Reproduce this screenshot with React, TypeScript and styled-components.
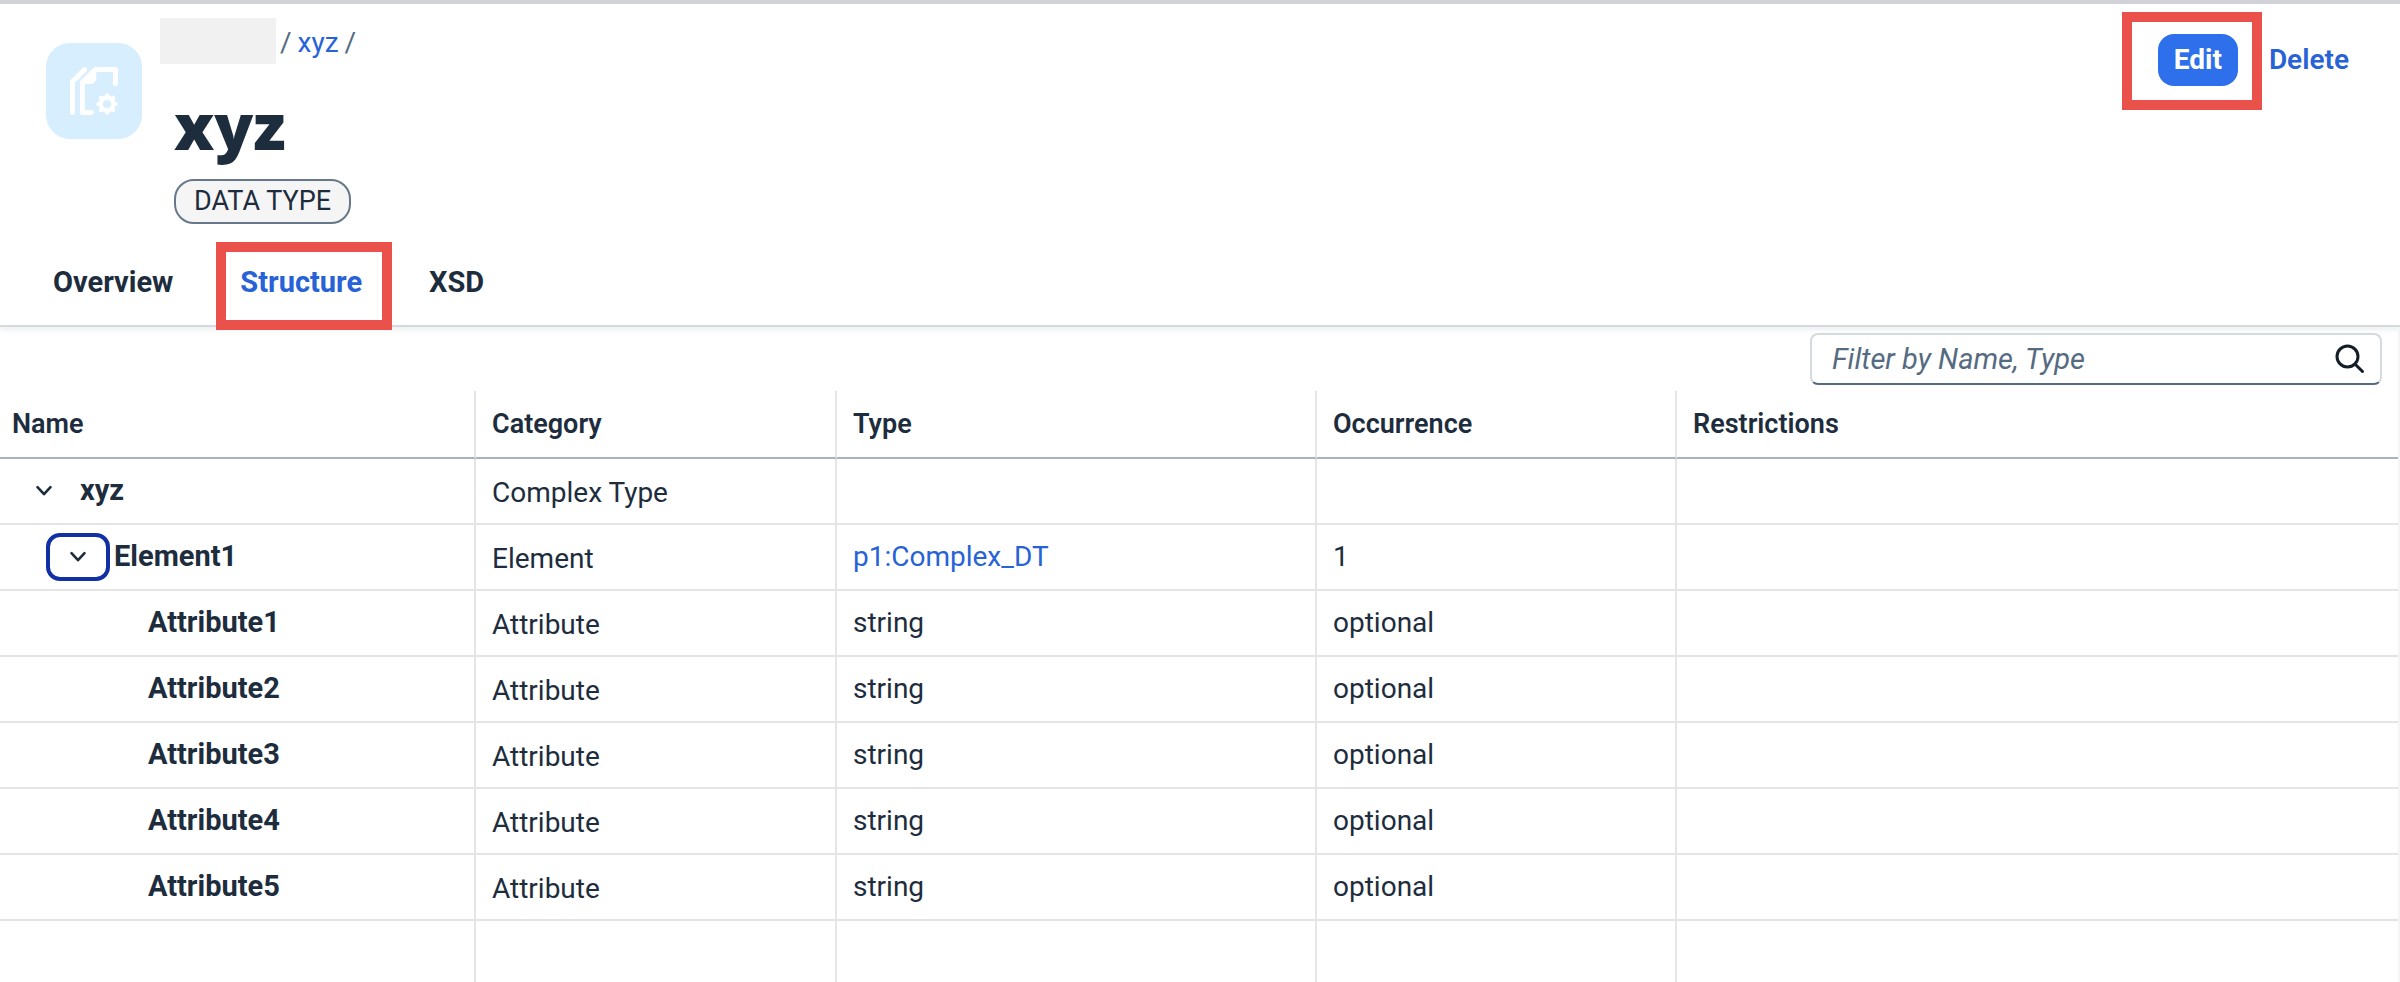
import React, { useState } from "react";
import styled, { createGlobalStyle } from "styled-components";

const ink = "#1d2d3e";
const linkBlue = "#2762d6";
const marker = "#ea514b";
const rule = "#e5e5e5";

const GlobalStyle = createGlobalStyle`
  *, *::before, *::after { box-sizing: border-box; }
  body {
    margin: 0;
    background: #ffffff;
    color: ${ink};
    font-family: Roboto, "Liberation Sans", sans-serif;
    font-size: 28px;
    line-height: 32px;
  }
  button, input { font: inherit; color: inherit; }
  button { border: 0; background: none; cursor: pointer; }
`;

const Page = styled.div`
  display: flex;
  flex-direction: column;
`;

const Header = styled.header`
  border-top: 4px solid #d0d2d7;
  border-bottom: 2px solid #d7dadc;
  box-shadow: 0 2px 6px rgba(34, 53, 72, 0.1);
`;

const Summary = styled.div`
  display: flex;
  align-items: flex-start;
  padding: 14px 35px 0 46px;
`;

const Avatar = styled.div`
  display: flex;
  align-items: center;
  justify-content: center;
  width: 96px;
  height: 96px;
  margin-top: 25px;
  border-radius: 24px;
  background: #d6eefd;
`;

const Identity = styled.div`
  display: flex;
  flex-direction: column;
  align-items: flex-start;
  flex: 1;
  margin-left: 18px;
`;

const Breadcrumb = styled.nav`
  display: flex;
  height: 46px;
  gap: 6px;
  color: #556b82;
  line-height: 50px;
`;

const RedactedCrumb = styled.span`
  width: 116px;
  height: 46px;
  margin-right: -2px;
  background: #f1f1f1;
`;

const TextLink = styled.a`
  color: ${linkBlue};
  text-decoration: none;
`;

const Title = styled.h1`
  margin: 22px 0 0 14px;
  font-family: "Open Sans", Roboto, sans-serif;
  font-size: 64px;
  font-weight: 800;
  line-height: 80px;
`;

const Tag = styled.span`
  margin: 13px 0 0 14px;
  padding: 5px 18px 6px;
  border: 2px solid #667889;
  border-radius: 20px;
  background: #f5f5f5;
  font-size: 27px;
  line-height: 30px;
`;

const Actions = styled.div`
  display: flex;
  align-items: center;
  gap: 15px;
  margin-top: 16px;
`;

const Marked = styled.span`
  position: relative;
  display: inline-flex;
`;

const Marker = styled.span<{ $inset: string }>`
  position: absolute;
  inset: ${(p) => p.$inset};
  border: 10px solid ${marker};
  pointer-events: none;
  z-index: 1;
`;

const ActionButton = styled.button<{ $primary?: boolean }>`
  height: 52px;
  padding: 0 16px;
  border-radius: 16px;
  font-weight: ${(p) => (p.$primary ? 700 : 600)};
  background: ${(p) => (p.$primary ? "#2e6fec" : "transparent")};
  color: ${(p) => (p.$primary ? "#ffffff" : linkBlue)};
`;

const TabList = styled.div`
  display: flex;
  gap: 67px;
  padding: 34px 53px 0;
`;

const Tab = styled.button<{ $active: boolean }>`
  height: 67px;
  padding: 8px 0 27px;
  font-size: 29px;
  font-weight: 700;
  color: ${(p) => (p.$active ? linkBlue : ink)};
`;

const Content = styled.main`
  border-right: 2px solid #f4f5f6;
`;

const Toolbar = styled.div`
  display: flex;
  justify-content: flex-end;
  padding: 6px 16px 6px;
`;

const SearchField = styled.label`
  display: flex;
  align-items: center;
  width: 572px;
  height: 52px;
  padding: 0 15px 0 20px;
  border: 2px solid #d5dadd;
  border-bottom-color: #556b82;
  border-radius: 8px;
  background: #ffffff;
`;

const SearchInput = styled.input`
  flex: 1;
  min-width: 0;
  padding: 0;
  border: 0;
  outline: 0;
  background: none;
  font-size: 29px;
  &::placeholder {
    color: #556b82;
    font-style: italic;
    opacity: 1;
  }
`;

const Table = styled.table`
  width: 100%;
  table-layout: fixed;
  border-collapse: separate;
  border-spacing: 0;
`;

const Column = styled.col<{ $width?: number }>`
  width: ${(p) => (p.$width ? `${p.$width}px` : "auto")};
`;

const HeadCell = styled.th`
  height: 68px;
  padding: 0 16px;
  border-bottom: 2px solid #a8b3bd;
  border-right: 2px solid ${rule};
  font-size: 27px;
  font-weight: 600;
  text-align: left;
  &:first-child { padding-left: 12px; }
  &:last-child { border-right: 0; }
`;

const Row = styled.tr``;

const Cell = styled.td<{ $lowered?: boolean }>`
  height: 66px;
  padding: ${(p) => (p.$lowered ? "3px 16px 0" : "0 16px")};
  border-bottom: 2px solid ${rule};
  border-right: 2px solid ${rule};
  &:last-child { border-right: 0; }
`;

const FillerCell = styled(Cell)`
  height: 61px;
  border-bottom: 0;
`;

const NameCell = styled.th<{ $level: number }>`
  height: 66px;
  padding: 0 0 0 ${(p) => [12, 46, 148][p.$level]}px;
  border-bottom: 2px solid ${rule};
  border-right: 2px solid ${rule};
  font-size: 29px;
  font-weight: 700;
  text-align: left;
`;

const NameContent = styled.div`
  display: flex;
  align-items: center;
  gap: 4px;
`;

const NameText = styled.span`
  padding-bottom: 2px;
`;

const Expander = styled.button<{ $focused?: boolean }>`
  display: flex;
  align-items: center;
  justify-content: center;
  width: 64px;
  height: 48px;
  padding: 0;
  border: 4px solid ${(p) => (p.$focused ? "#1130a3" : "transparent")};
  border-radius: 14px;
`;

const Chevron = () => (
  <svg width="18" height="12" viewBox="0 0 18 12" fill="none" stroke={ink} strokeWidth="2.6" strokeLinecap="round" strokeLinejoin="round" aria-hidden="true">
    <path d="M2.5 2.2L9 9.2L15.5 2.2" />
  </svg>
);

const SearchIcon = () => (
  <svg width="30" height="30" viewBox="0 0 30 30" fill="none" stroke="#131e29" strokeWidth="3" strokeLinecap="round" aria-hidden="true">
    <circle cx="12.5" cy="12.5" r="10.5" />
    <path d="M20.2 20.2L27.5 27.5" />
  </svg>
);

const DocumentSettingsIcon = () => (
  <svg width="48" height="48" viewBox="0 0 48 48" fill="none" stroke="#ffffff" strokeWidth="5" strokeLinecap="round" strokeLinejoin="round" aria-hidden="true">
    <path d="M2.5 45.6V14.6L14.6 2.6" />
    <path d="M21.2 45.6H12.4V15.2L25.4 2.5H45.5V16.6" />
    <path d="M11 16.9V15L25 1.5L26.3 3V11a6 6 0 0 1-6 6z" fill="#ffffff" stroke="none" />
    <g fill="#ffffff" stroke="none">
      <circle cx="37" cy="37" r="8.4" />
      {[0, 45, 90, 135, 180, 225, 270, 315].map((angle) => (
        <circle key={angle} cx="37" cy="28.6" r="2.3" transform={`rotate(${angle} 37 37)`} />
      ))}
    </g>
    <circle cx="37" cy="37" r="4.1" fill="#d6eefd" stroke="none" />
  </svg>
);

type Entry = {
  name: string;
  level: number;
  category: string;
  type?: string;
  typeLink?: boolean;
  occurrence?: string;
  focused?: boolean;
};

const entries: Entry[] = [
  { name: "xyz", level: 0, category: "Complex Type" },
  { name: "Element1", level: 1, category: "Element", type: "p1:Complex_DT", typeLink: true, occurrence: "1", focused: true },
  ...[1, 2, 3, 4, 5].map((n) => ({
    name: `Attribute${n}`,
    level: 2,
    category: "Attribute",
    type: "string",
    occurrence: "optional",
  })),
];

const tabs = ["Overview", "Structure", "XSD"];

export default function App() {
  const [active, setActive] = useState("Structure");
  const [filter, setFilter] = useState("");

  return (
    <Page>
      <GlobalStyle />
      <Header>
        <Summary>
          <Avatar>
            <DocumentSettingsIcon />
          </Avatar>
          <Identity>
            <Breadcrumb aria-label="Breadcrumb">
              <RedactedCrumb />
              <span>/</span>
              <TextLink href="#xyz">xyz</TextLink>
              <span>/</span>
            </Breadcrumb>
            <Title>xyz</Title>
            <Tag>DATA TYPE</Tag>
          </Identity>
          <Actions>
            <Marked>
              <ActionButton $primary type="button">Edit</ActionButton>
              <Marker $inset="-22px -24px -24px -36px" />
            </Marked>
            <ActionButton type="button">Delete</ActionButton>
          </Actions>
        </Summary>
        <TabList role="tablist">
          {tabs.map((tab) => (
            <Marked key={tab}>
              <Tab type="button" role="tab" aria-selected={tab === active} $active={tab === active} onClick={() => setActive(tab)}>
                {tab}
              </Tab>
              {tab === "Structure" && <Marker $inset="-16px -30px -5px -24px" />}
            </Marked>
          ))}
        </TabList>
      </Header>
      <Content>
        <Toolbar>
          <SearchField>
            <SearchInput
              type="text"
              aria-label="Filter"
              placeholder="Filter by Name, Type"
              value={filter}
              onChange={(e) => setFilter(e.target.value)}
            />
            <SearchIcon />
          </SearchField>
        </Toolbar>
        <Table>
          <colgroup>
            <Column $width={476} />
            <Column $width={361} />
            <Column $width={480} />
            <Column $width={360} />
            <Column />
          </colgroup>
          <thead>
            <Row>
              {["Name", "Category", "Type", "Occurrence", "Restrictions"].map((label) => (
                <HeadCell key={label} scope="col">{label}</HeadCell>
              ))}
            </Row>
          </thead>
          <tbody>
            {entries.map((entry) => (
              <Row key={entry.name}>
                <NameCell scope="row" $level={entry.level}>
                  <NameContent>
                    {entry.level < 2 && (
                      <Expander type="button" aria-expanded="true" aria-label={`Collapse ${entry.name}`} $focused={entry.focused}>
                        <Chevron />
                      </Expander>
                    )}
                    <NameText>{entry.name}</NameText>
                  </NameContent>
                </NameCell>
                <Cell $lowered>{entry.category}</Cell>
                <Cell>{entry.typeLink ? <TextLink href="#type">{entry.type}</TextLink> : entry.type}</Cell>
                <Cell>{entry.occurrence}</Cell>
                <Cell />
              </Row>
            ))}
            <Row>
              <FillerCell />
              <FillerCell />
              <FillerCell />
              <FillerCell />
              <FillerCell />
            </Row>
          </tbody>
        </Table>
      </Content>
    </Page>
  );
}
